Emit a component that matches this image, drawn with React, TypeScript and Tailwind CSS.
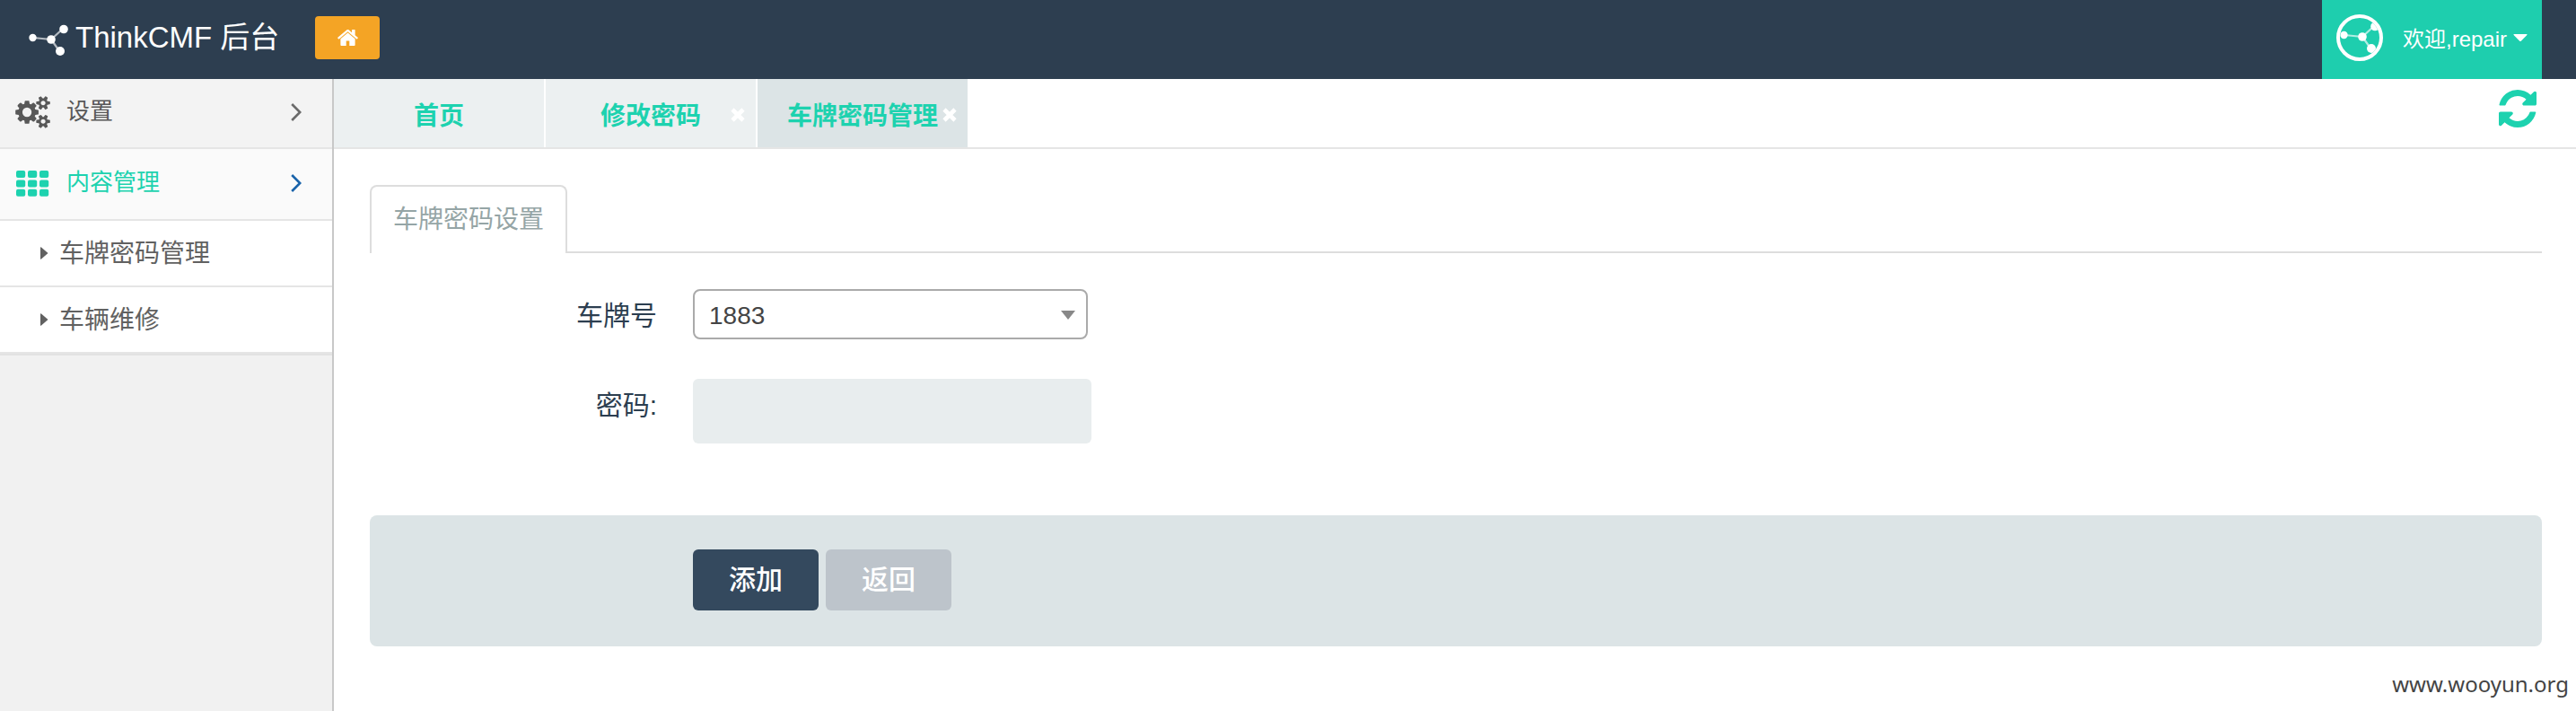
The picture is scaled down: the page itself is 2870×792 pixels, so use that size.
import React, { useState } from "react";

function Molecule({ className }: { className: string }) {
  return (
    <svg viewBox="0 0 44 36" className={className} aria-hidden="true">
      <g stroke="#fff" strokeOpacity="0.65" strokeWidth="2.2">
        <path d="M5 15 25 17M25 17 38 5M25 17 35 31" />
      </g>
      <g fill="#fff">
        <circle cx="4.5" cy="15" r="4.2" />
        <circle cx="25" cy="17" r="4.8" />
        <circle cx="39" cy="5.5" r="4.8" />
        <circle cx="35" cy="30" r="5" />
      </g>
    </svg>
  );
}

function HomeIcon() {
  return (
    <svg viewBox="96 256 1600 1280" className="h-[18px] w-[23px] fill-white" aria-hidden="true">
      <path d="M1472 992v480q0 26-19 45t-45 19h-384v-384h-256v384h-384q-26 0-45-19t-19-45v-480q0-1 .5-3t.5-3l575-474 575 474q1 2 1 6zm223-69l-62 74q-8 9-21 11h-3q-13 0-21-7l-692-577-692 577q-12 8-24 7-13-2-21-11l-62-74q-8-10-7-23.5t11-21.5l719-599q32-26 76-26t76 26l244 204v-195q0-14 9-23t23-9h192q14 0 23 9t9 23v408l219 182q10 8 11 21.5t-7 23.5z" />
    </svg>
  );
}

function CogsIcon() {
  return (
    <svg viewBox="0 0 1920 1792" className="h-9 w-[39px] fill-current" aria-hidden="true">
      <path d="M896 896q0-106-75-181t-181-75-181 75-75 181 75 181 181 75 181-75 75-181zm768 512q0-52-38-90t-90-38-90 38-38 90q0 53 37.5 90.5t90.5 37.5 90.5-37.5 37.5-90.5zm0-1024q0-52-38-90t-90-38-90 38-38 90q0 53 37.5 90.5t90.5 37.5 90.5-37.5 37.5-90.5zm-384 421v185q0 10-7 19.5t-16 10.5l-155 24q-11 35-32 76 34 48 90 115 7 11 7 20 0 12-7 19-23 30-82.5 89.5t-78.5 59.5q-11 0-21-7l-115-90q-37 19-77 31-11 108-23 155-7 24-30 24h-186q-11 0-20-7.5t-10-17.5l-23-153q-34-10-75-31l-118 89q-7 7-20 7-11 0-21-8-144-133-144-160 0-9 7-19 10-14 41-53t47-61q-23-44-35-82l-152-24q-10-1-17-9.5t-7-19.5v-185q0-10 7-19.5t16-10.5l155-24q11-35 32-76-34-48-90-115-7-11-7-20 0-12 7-20 22-30 82-89t79-59q11 0 21 7l115 90q34-18 77-32 11-108 23-154 7-24 30-24h186q11 0 20 7.5t10 17.5l23 153q34 10 75 31l118-89q8-7 20-7 11 0 21 8 144 133 144 160 0 9-7 19-12 16-42 54t-45 60q23 48 34 82l152 23q10 2 17 10.5t7 19.5zm640 533v140q0 16-149 31-12 27-30 52 51 113 51 138 0 4-4 7-122 71-124 71-8 0-46-47t-52-68q-20 2-30 2t-30-2q-14 21-52 68t-46 47q-2 0-124-71-4-3-4-7 0-25 51-138-18-25-30-52-149-15-149-31v-140q0-16 149-31 13-29 30-52-51-113-51-138 0-4 4-7 4-2 35-20t59-34 30-16q8 0 46 46.5t52 67.5q20-2 30-2t30 2q51-71 92-112l6-2q4 0 124 70 4 3 4 7 0 25-51 138 17 23 30 52 149 15 149 31zm0-1024v140q0 16-149 31-12 27-30 52 51 113 51 138 0 4-4 7-122 71-124 71-8 0-46-47t-52-68q-20 2-30 2t-30-2q-14 21-52 68t-46 47q-2 0-124-71-4-3-4-7 0-25 51-138-18-25-30-52-149-15-149-31v-140q0-16 149-31 13-29 30-52-51-113-51-138 0-4 4-7 4-2 35-20t59-34 30-16q8 0 46 46.5t52 67.5q20-2 30-2t30 2q51-71 92-112l6-2q4 0 124 70 4 3 4 7 0 25-51 138 17 23 30 52 149 15 149 31z" />
    </svg>
  );
}

function GridIcon() {
  const cells = [0, 1, 2].flatMap((r) => [0, 1, 2].map((c) => [c, r]));
  return (
    <svg viewBox="-1 0 39 29" className="h-[29px] w-[39px] fill-current" aria-hidden="true">
      {cells.map(([c, r]) => (
        <rect key={`${c}${r}`} x={c * 13} y={r * 10.4} width="10.2" height="8" rx="2" />
      ))}
    </svg>
  );
}

function RefreshIcon() {
  return (
    <svg viewBox="128 128 1536 1536" className="size-[42px] fill-current" aria-hidden="true">
      <path d="M1639 1056q0 5-1 7-64 268-268 434.5t-478 166.5q-146 0-282.5-55t-243.5-157l-129 129q-19 19-45 19t-45-19-19-45v-448q0-26 19-45t45-19h448q26 0 45 19t19 45-19 45l-137 137q71 66 161 102t187 36q134 0 250-65t186-179q11-17 53-117 8-23 30-23h192q13 0 22.5 9.5t9.5 22.5zm25-800v448q0 26-19 45t-45 19h-448q-26 0-45-19t-19-45 19-45l138-138q-148-137-349-137-134 0-250 65t-186 179q-11 17-53 117-8 23-30 23h-199q-13 0-22.5-9.5t-9.5-22.5v-7q65-268 270-434.5t480-166.5q146 0 284 55.5t245 156.5l130-129q19-19 45-19t45 19 19 45z" />
    </svg>
  );
}

function Chevron() {
  return (
    <svg viewBox="0 0 12 20" className="h-5 w-3" fill="none" stroke="currentColor" strokeWidth="2.6" aria-hidden="true">
      <path d="M1.2 1 10.2 10 1.2 19" />
    </svg>
  );
}

function MenuItem({ label, icon, active }: { label: string; icon: React.ReactNode; active?: boolean }) {
  return (
    <a
      href="#"
      className={
        active
          ? "flex h-20 items-center gap-[18px] border-b-2 border-[#e5e5e5] bg-[#fafafa] pr-[34px] pb-0.5 pl-[17px] text-[#1dd2af]"
          : "flex h-[78px] items-center gap-[18px] border-b-2 border-[#e5e5e5] bg-[#f3f3f3] pr-[34px] pb-0.5 pl-[17px] text-[#585858]"
      }
    >
      {icon}
      <span className="flex-1 pb-0.5 text-[26px] leading-8">{label}</span>
      <span className={active ? "text-[#1963aa]" : "text-[#6a6a6a]"}>
        <Chevron />
      </span>
    </a>
  );
}

function SubItem({ label }: { label: string }) {
  return (
    <li className="border-b-2 border-[#e5e5e5]">
      <a href="#" className="flex h-[72px] items-center gap-3 pl-[45px] text-[28px] text-[#616161]">
        <svg viewBox="0 0 9 14" className="h-3.5 w-[9px] fill-current" aria-hidden="true">
          <path d="M0 0.5Q0 0 1 0.6L8.5 7 1 13.4Q0 14 0 13.5Z" />
        </svg>
        <span className="pt-0.5">{label}</span>
      </a>
    </li>
  );
}

function PageTab({ label, active, closable }: { label: string; active?: boolean; closable?: boolean }) {
  return (
    <li
      className={
        active
          ? "relative h-[76px] w-[234px] bg-[#dce4e6]"
          : "relative h-[76px] w-[234px] bg-[#ecf0f1]"
      }
    >
      <a
        href="#"
        className="flex h-full items-center justify-center pt-2 text-[28px] font-bold whitespace-nowrap text-[#1dd2af]"
      >
        {label}
      </a>
      {closable && (
        <button type="button" aria-label={`关闭${label}`} className="absolute top-8 right-3 cursor-pointer">
          <svg viewBox="0 0 16 16" className="size-4" fill="none" stroke="#fff" strokeWidth="4.6" aria-hidden="true">
            <path d="M2 2 14 14M14 2 2 14" />
          </svg>
        </button>
      )}
    </li>
  );
}

export default function App() {
  const [plate, setPlate] = useState("1883");
  const [password, setPassword] = useState("");

  return (
    <div className="flex min-h-screen flex-col bg-white font-['Liberation_Sans','Noto_Sans_CJK_SC',sans-serif]">
      <header className="flex h-[88px] bg-[#2d3e50] pr-[38px] pl-8">
        <div className="flex items-center gap-10 pb-1">
          <a href="#" className="flex items-center gap-2 text-white">
            <Molecule className="mt-1.5 h-9 w-11" />
            <span className="text-[33px] leading-10 whitespace-nowrap">ThinkCMF 后台</span>
          </a>
          <a
            href="#"
            aria-label="首页"
            className="flex h-12 w-[72px] items-center justify-center rounded-sm bg-[#f4a425]"
          >
            <HomeIcon />
          </a>
        </div>
        <button
          type="button"
          className="ml-auto flex h-full cursor-pointer items-center bg-[#1eceae] px-4 pb-1 text-2xl text-white"
        >
          <span className="flex size-[52px] items-center justify-center overflow-hidden rounded-full border-4 border-white">
            <Molecule className="h-9 w-11 shrink-0" />
          </span>
          <span className="ml-[22px] pt-1 whitespace-nowrap">欢迎,repair</span>
          <svg viewBox="0 0 16 8" className="ml-[7px] h-2 w-4 fill-white" aria-hidden="true">
            <path d="M1 0H15Q16 0 15.4 1L9 7.4Q8 8.4 7 7.4L0.6 1Q0 0 1 0Z" />
          </svg>
        </button>
      </header>

      <div className="flex flex-1">
        <aside className="w-[372px] shrink-0 border-r-2 border-[#c8c8c8] bg-[#f1f1f1]">
          <nav>
            <MenuItem label="设置" icon={<CogsIcon />} />
            <MenuItem label="内容管理" icon={<GridIcon />} active />
            <ul className="border-b-2 border-[#e2e2e2] bg-white">
              <SubItem label="车牌密码管理" />
              <SubItem label="车辆维修" />
            </ul>
          </nav>
        </aside>

        <main className="min-w-0 flex-1">
          <div className="flex items-start justify-between border-b-2 border-[#e5e5e5] pr-[44px]">
            <ul className="flex gap-0.5">
              <PageTab label="首页" />
              <PageTab label="修改密码" closable />
              <PageTab label="车牌密码管理" active closable />
            </ul>
            <button type="button" aria-label="刷新" className="mt-3 cursor-pointer text-[#1dd2af]">
              <RefreshIcon />
            </button>
          </div>

          <div className="pt-10 pr-[38px] pl-10">
            <div className="flex">
              <a
                href="#"
                className="flex h-[76px] items-center rounded-t-lg border-2 border-b-0 border-[#ddd] px-6 text-[28px] whitespace-nowrap text-[#95a5a6]"
              >
                车牌密码设置
              </a>
              <div className="flex-1 border-b-2 border-[#ddd]" />
            </div>

            <form className="pt-10" onSubmit={(e) => e.preventDefault()}>
              <div className="flex items-center gap-10">
                <label htmlFor="plate" className="w-80 pt-1 text-right text-[30px] leading-10 text-[#2c3e50]">
                  车牌号
                </label>
                <div className="relative w-[440px]">
                  <select
                    id="plate"
                    value={plate}
                    onChange={(e) => setPlate(e.target.value)}
                    className="block h-14 w-full appearance-none rounded-lg border-2 border-[#aaa] bg-white px-4 pt-1 text-[28px] text-[#444]"
                  >
                    <option value="1883">1883</option>
                  </select>
                  <svg
                    viewBox="0 0 16 10"
                    className="pointer-events-none absolute top-6 right-3.5 h-2.5 w-4 fill-[#888]"
                    aria-hidden="true"
                  >
                    <path d="M0 0H16L8 10Z" />
                  </svg>
                </div>
              </div>

              <div className="mt-11 flex gap-10">
                <label htmlFor="password" className="w-80 pt-2.5 text-right text-[30px] leading-10 text-[#2c3e50]">
                  密码:
                </label>
                <input
                  id="password"
                  type="password"
                  value={password}
                  onChange={(e) => setPassword(e.target.value)}
                  className="h-[72px] w-[444px] rounded-md bg-[#e8edee] px-4 text-[28px]"
                />
              </div>

              <div className="mt-20 flex gap-2 rounded-lg bg-[#dce4e6] pt-[38px] pb-10 pl-[360px]">
                <button
                  type="submit"
                  className="flex h-[68px] w-[140px] cursor-pointer items-center justify-center rounded-md bg-[#34495e] pb-0.5 text-[30px] font-medium text-white"
                >
                  添加
                </button>
                <a
                  href="#"
                  className="flex h-[68px] w-[140px] items-center justify-center rounded-md bg-[#bdc4cb] pb-0.5 text-[30px] font-medium text-white"
                >
                  返回
                </a>
              </div>
            </form>
          </div>
        </main>
      </div>

      <p className="absolute right-2 bottom-3.5 font-['Noto_Sans',sans-serif] text-2xl text-[#444]">www.wooyun.org</p>
    </div>
  );
}
